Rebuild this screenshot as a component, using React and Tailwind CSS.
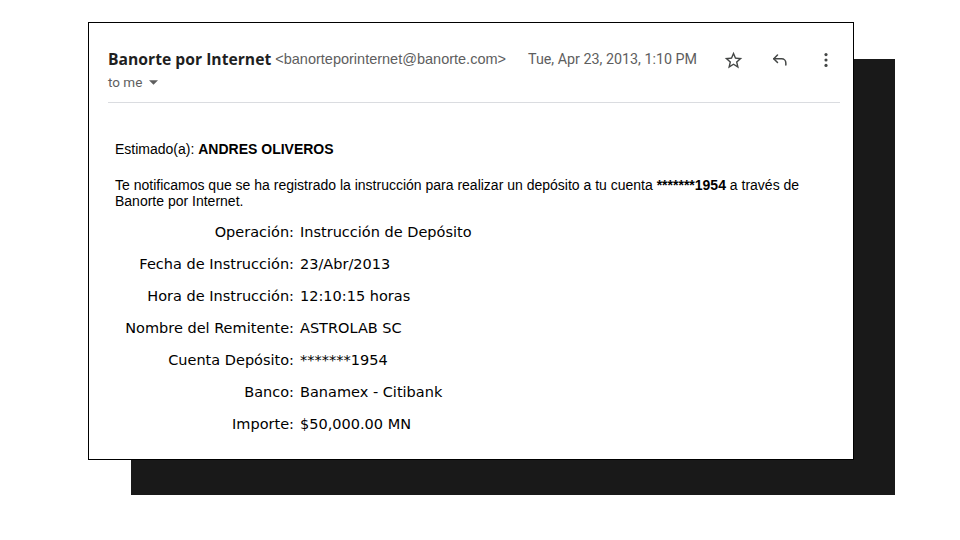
import React from 'react';

const rows = [
  ['Operación', 'Instrucción de Depósito'],
  ['Fecha de Instrucción', '23/Abr/2013'],
  ['Hora de Instrucción', '12:10:15 horas'],
  ['Nombre del Remitente', 'ASTROLAB SC'],
  ['Cuenta Depósito', '*******1954'],
  ['Banco', 'Banamex - Citibank'],
  ['Importe', '$50,000.00 MN'],
];

const StarIcon = () => (
  <svg viewBox="0 0 24 24" className="w-[21px] h-[21px]" fill="#444746">
    <path d="M22 9.24l-7.19-.62L12 2 9.19 8.63 2 9.24l5.46 4.73L5.82 21 12 17.27 18.18 21l-1.63-7.03L22 9.24zM12 15.4l-3.76 2.27 1-4.28-3.32-2.88 4.38-.38L12 6.1l1.71 4.04 4.38.38-3.32 2.88 1 4.28L12 15.4z" />
  </svg>
);

const ReplyIcon = () => (
  <svg viewBox="0 0 24 24" className="w-[20px] h-[20px]" fill="none" stroke="#444746" strokeWidth="1.8" strokeLinecap="round" strokeLinejoin="round">
    <path d="M9 6L4.5 10.5 9 15" />
    <path d="M4.5 10.5H14a5 5 0 0 1 5 5V18" />
  </svg>
);

const MoreIcon = () => (
  <svg viewBox="0 0 24 24" className="w-[20px] h-[20px]" fill="#444746">
    <circle cx="12" cy="5.5" r="1.9" />
    <circle cx="12" cy="12" r="1.9" />
    <circle cx="12" cy="18.5" r="1.9" />
  </svg>
);

export default function App() {
  return (
    <div className="relative w-[960px] h-[540px] bg-white overflow-hidden">
      {/* dark backdrop behind the card */}
      <div className="absolute left-[131px] top-[59px] w-[764px] h-[436px] bg-[#191919]" />

      <div className="relative ml-[88px] mt-[22px] w-[766px] h-[438px] bg-white border border-black pl-[19px] pr-[13px] pt-[26px]">
        {/* header */}
        <div className="flex items-center h-[22px]">
          <span className="font-['Open_Sans',sans-serif] text-[15.7px] font-bold text-[#1f1f1f]">Banorte por Internet</span>
          <span className="ml-[4px] font-['Liberation_Sans',Arial,sans-serif] text-[14.5px] text-[#5e5e5e]">&lt;banorteporinternet@banorte.com&gt;</span>
          <span className="ml-[22px] font-['Roboto',sans-serif] text-[14.3px] text-[#5e5e5e]">Tue, Apr 23, 2013, 1:10 PM</span>
          <div className="ml-auto flex items-center gap-[26px] mr-[4px]">
            <StarIcon />
            <ReplyIcon />
            <MoreIcon />
          </div>
        </div>
        <div className="flex items-center h-[20px] mt-[1px] font-['Roboto',sans-serif] text-[13.5px] text-[#5e5e5e]">
          to me
          <svg viewBox="0 0 10 5" className="ml-[7px] w-[9px] h-[5px]" fill="#5e5e5e">
            <path d="M0 0h10L5 5z" />
          </svg>
        </div>
        <div className="mt-[10px] h-px bg-[#dadce0]" />

        {/* body */}
        <div className="pl-[7px] font-['Liberation_Sans',Arial,sans-serif] text-[14px] text-black">
          <p className="mt-[38px] leading-[16px]">
            Estimado(a): <b>ANDRES OLIVEROS</b>
          </p>
          <p className="mt-[21px] leading-[15.5px]">
            Te notificamos que se ha registrado la instrucción para realizar un depósito a tu cuenta <b>*******1954</b> a través de
            <br />
            Banorte por Internet.
          </p>
        </div>

        <div className="mt-[8px] flex flex-col font-['DejaVu_Sans',Verdana,sans-serif] text-[14.5px] text-black">
          {rows.map(([label, value]) => (
            <div key={label} className="flex h-[32px] items-center">
              <span className="w-[186px] text-right">{label}:</span>
              <span className="ml-[6px]">{value}</span>
            </div>
          ))}
        </div>
      </div>
    </div>
  );
}
